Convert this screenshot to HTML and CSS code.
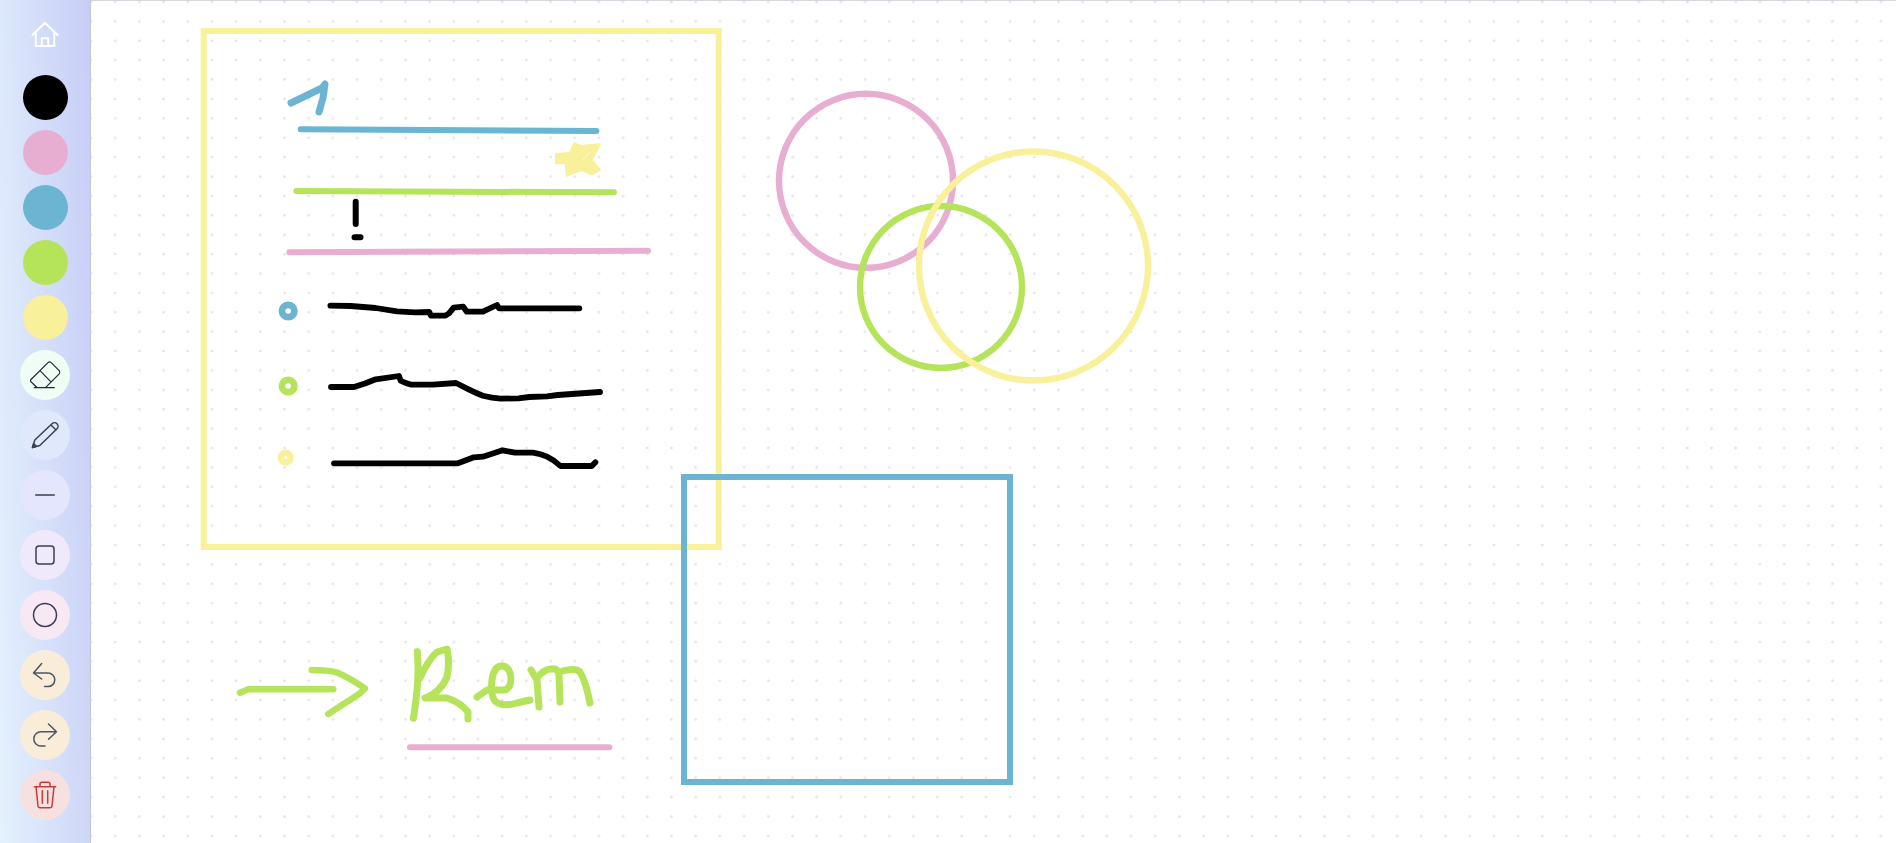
FILE: index.html
```html
<!DOCTYPE html>
<html lang="en">
<head>
<meta charset="utf-8">
<title>Whiteboard</title>
<link rel="stylesheet" href="styles.css">
</head>
<body>
<div class="app">
  <aside class="toolbar">
    <a class="home" href="#" aria-label="Home">
      <svg class="home-icon" viewBox="0 0 30 30"><path d="M2.5 16 15 3.7 27.5 16M5.8 13.5V27H24.2V13.5M11.7 27V19.3H18.3V27"/></svg>
    </a>
    <button class="swatch swatch-black" aria-label="Black"></button>
    <button class="swatch swatch-pink" aria-label="Pink"></button>
    <button class="swatch swatch-blue" aria-label="Blue"></button>
    <button class="swatch swatch-green" aria-label="Green"></button>
    <button class="swatch swatch-yellow" aria-label="Yellow"></button>
    <button class="tool tool-eraser" aria-label="Eraser">
      <svg class="icon icon-thin" viewBox="0 0 50 50"><path d="M11 29.5 28 12.6a2.4 2.4 0 0 1 3.2 0l8 8a2.4 2.4 0 0 1 0 3.2L25.5 37.7H17.2L11 31.8a1.6 1.6 0 0 1 0-2.3ZM20 20.7 30.7 31.7M14.3 37.7H34.3"/></svg>
    </button>
    <button class="tool tool-pencil" aria-label="Pencil">
      <svg class="icon" viewBox="0 0 50 50"><path d="M12.5 37.5 14.8 30 32 13.8a3.5 3.5 0 0 1 5 5L19.8 35.5ZM31 15 36 20"/><path class="tip" d="M12.5 37.5 13.6 33.6 16.4 36.3Z"/></svg>
    </button>
    <button class="tool tool-line" aria-label="Line">
      <svg class="icon" viewBox="0 0 50 50"><path d="M15.7 25H34.3"/></svg>
    </button>
    <button class="tool tool-square" aria-label="Rectangle">
      <svg class="icon" viewBox="0 0 50 50"><rect x="16" y="16" width="18" height="18" rx="3"/></svg>
    </button>
    <button class="tool tool-circle" aria-label="Circle">
      <svg class="icon" viewBox="0 0 50 50"><circle cx="25" cy="25" r="11.5"/></svg>
    </button>
    <button class="tool tool-history" aria-label="Undo">
      <svg class="icon icon-soft" viewBox="0 0 50 50"><path d="M21.7 13.5 13.5 23 21.7 29M13.5 23H28a6.8 6.8 0 0 1 0 13.6H24.5"/></svg>
    </button>
    <button class="tool tool-history" aria-label="Redo">
      <svg class="icon icon-soft" viewBox="0 0 50 50"><path d="M28.5 14 36.5 21.7 28.5 29.3M36.5 21.7H21a7.2 7.2 0 0 0 0 14.4H25"/></svg>
    </button>
    <button class="tool tool-trash" aria-label="Clear">
      <svg class="icon icon-red" viewBox="0 0 50 50"><path d="M14.3 16.7H35.7M20 16.7V14a1.8 1.8 0 0 1 1.8-1.8H28.2A1.8 1.8 0 0 1 30 14V16.7M16 16.7 18 36a1.8 1.8 0 0 0 1.8 1.7H30.2A1.8 1.8 0 0 0 32 36L34 16.7M22.3 20.7V33.3M27.7 20.7V33.3"/></svg>
    </button>
  </aside>
  <main class="board">
    <svg class="drawing" viewBox="91 1 1805 842">
      <rect class="s6 yellow" x="203.7" y="31" width="515" height="516"/>
      <rect class="s6 blue" x="684" y="477" width="326" height="305"/>

      <path class="s7 blue" d="M291 103 322 88 325 84 323 98 319 112"/>
      <path class="s6 blue" d="M300.7 129.3 596.4 131"/>
      <path class="blob" d="M556 154.3 570.4 152.7 574 143.3 581 146 600 144.3 591.8 160 600 170 591.8 174 581 170 566.8 175.7 565.7 163.3 556 163.3Z"/>
      <path class="slash" d="M583 160 590 152"/>
      <path class="s6 green" d="M296.4 191 614 192.3"/>
      <path class="s6 black" d="M355.7 201.7V224M354.5 237.3H360.5"/>
      <path class="s6 pink" d="M289.3 252.3 648 250.7"/>

      <circle class="ring blue" cx="288.2" cy="311" r="6.2"/>
      <circle class="ring green" cx="288.2" cy="386" r="6.2"/>
      <circle class="ring-small yellow" cx="285.7" cy="457.7" r="4.8"/>

      <path class="s55 black" d="M330.4 305.7 350.7 306 375.7 308 397 311.3 415 312.3 429.3 312 431 315.7H445.4L449 313.3 453.6 307.7 463.2 306.7 466.8 311.7H482.9L497 305 499 308.3H579.3"/>
      <path class="s55 black" d="M331 387H354L365 383.5Q371 381 375.7 379.3L399 376 400.7 380.7Q405 383 411.4 384.7H432.9L456 383 468.6 389.3Q476 393 482.9 395.7 492 398 500.7 398.7L518.6 398.3 529.3 397 547 396.3 557.9 395 600 392"/>
      <path class="s55 black" d="M334 463.3H457.9L473.9 457.3 482.9 456.7 493.6 453.3 502.5 450.3 515 452.7H532.9Q541 454 547 456.7 554 460 560.4 466H591.8L595.4 462.3"/>

      <circle class="s65 pink" cx="866" cy="180.8" r="87"/>
      <circle class="s65 green" cx="941" cy="287" r="81"/>
      <circle class="s65 yellow" cx="1033.5" cy="266" r="114.5"/>

      <path class="s65 green" d="M240 692.7 248.3 689.3H333.3"/>
      <path class="s65 green" d="M311.7 670Q328 670 337 672.5 348 677 365 688.3 360 694 353 698 342 705 328.3 714"/>
      <path class="s7 green" d="M417.3 651.7Q419 670 417 690T413.3 718.3"/>
      <path class="s7 green" d="M420 678Q428 660 437 652L447 649Q450 663 447 677 440 693 425 698H447Q460 702 468 712V719"/>
      <path class="s7 green" d="M477 697 487 690H505Q511 688 511 678 510 667 503 666 494 665 492 680 490 697 496 702 503 707 517 703L530 700"/>
      <path class="s7 green" d="M531 670 537 680 539 707M537 678Q545 668 552 669 558 668 559 675L560 702M560 672Q575 667 580 672 586 682 590 703"/>
      <path class="s6 pink" d="M410 747.3H609.3"/>
    </svg>
  </main>
</div>
</body>
</html>
```
FILE: styles.css
```css
* {
  box-sizing: border-box;
}

html,
body {
  margin: 0;
  height: 100%;
  overflow: hidden;
  font-family: "Liberation Sans", sans-serif;
}

.app {
  display: flex;
  height: 100vh;
}

.toolbar {
  flex: 0 0 91px;
  display: flex;
  flex-direction: column;
  align-items: center;
  gap: 10px;
  padding-top: 19px;
  background: linear-gradient(88deg, #e4f1fd, #c6cef6);
  border-right: 1px solid #c3c8d6;
}

.home {
  display: block;
  width: 30px;
  height: 30px;
  margin-bottom: 16px;
}

.home-icon {
  display: block;
  width: 30px;
  height: 30px;
  fill: none;
  stroke: #fff;
  stroke-width: 2;
  stroke-linecap: round;
  stroke-linejoin: round;
}

.swatch {
  flex: none;
  width: 45px;
  height: 45px;
  padding: 0;
  border: 0;
  border-radius: 50%;
}

.swatch-black { background: #000; }
.swatch-pink { background: #e7aed2; }
.swatch-blue { background: #6bb5d2; }
.swatch-green { background: #b5e35a; }
.swatch-yellow { background: #f8f09a; }

.tool {
  flex: none;
  width: 50px;
  height: 50px;
  padding: 0;
  border: 0;
  border-radius: 50%;
}

.tool-eraser { background: #f0fdf4; }
.tool-pencil { background: #e0e9fc; }
.tool-line { background: #e3e6fd; }
.tool-square { background: #f0e8fb; }
.tool-circle { background: #f8e8f3; }
.tool-history { background: #f9edda; }
.tool-trash { background: #f7e0e0; }

.icon {
  display: block;
  width: 50px;
  height: 50px;
  fill: none;
  stroke: #374151;
  stroke-width: 1.5;
  stroke-linecap: round;
  stroke-linejoin: round;
}

.tip {
  fill: #374151;
}

.icon-thin {
  stroke: #1f2937;
  stroke-width: 1.2;
}

.icon-soft {
  stroke: #4b5563;
}

.icon-red {
  stroke: #c93a3a;
}

.board {
  flex: 1;
  min-width: 0;
  background-color: #fff;
  background-image: radial-gradient(circle, #e2e2e2 0, #e8e8e8 1px, rgba(255, 255, 255, 0) 1.8px);
  background-size: 24.2px 19.4px;
  background-position: -12.1px -8.7px;
  border-top: 1px solid #d3d7de;
}

.drawing {
  display: block;
  width: 100%;
  height: 100%;
  fill: none;
  stroke-linecap: round;
  stroke-linejoin: round;
  filter: blur(0.35px);
}

.s55 { stroke-width: 5.8; }
.s6 { stroke-width: 6; }
.s65 { stroke-width: 6.4; }
.s7 { stroke-width: 7; }
.ring { stroke-width: 6.8; fill: #fff; }
.ring-small { stroke-width: 6.4; fill: #fff; }

.black { stroke: #000; }
.pink { stroke: #e7aed2; }
.blue { stroke: #6bb5d2; }
.green { stroke: #b5e35a; }
.yellow { stroke: #f8f09a; }

rect.s6 {
  stroke-linejoin: miter;
}

.blob {
  fill: #f8f09a;
  stroke: #f8f09a;
  stroke-width: 2;
}

.slash {
  stroke: #fffbd6;
  stroke-width: 1;
}
```
